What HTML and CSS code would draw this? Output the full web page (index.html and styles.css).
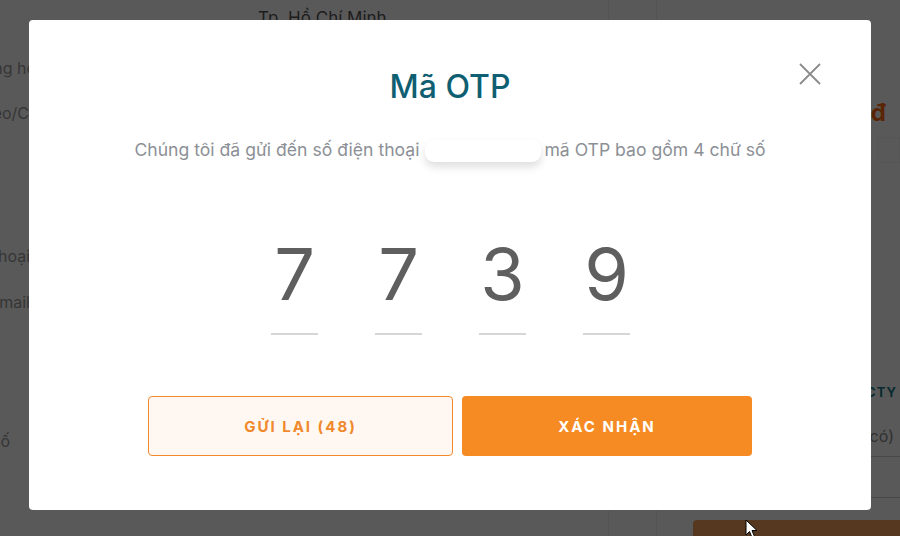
FILE: index.html
```html
<!DOCTYPE html>
<html lang="vi">
<head>
<meta charset="utf-8">
<title>Mã OTP</title>
<link rel="stylesheet" href="styles.css">
</head>
<body>
<div class="page">
  <div class="col-labels">
    <div class="label l1"><span>Cách xưng hô</span></div>
    <div class="label l2"><span>Theo/Cá</span></div>
    <div class="label l3"><span>Số điện thoại</span></div>
    <div class="label l4"><span>Email</span></div>
    <div class="label l5"><span>Mã số</span></div>
  </div>
  <div class="col-main">
    <div class="main-top">Tp. Hồ Chí Minh</div>
    <div class="main-bottom">Phường 05</div>
  </div>
  <div class="col-mid"></div>
  <div class="col-right">
    <div class="price">1.250.000đ</div>
    <div class="price-box"></div>
    <div class="invoice">XUẤT HÓA ĐƠN CTY</div>
    <div class="invoice-note">(nếu có)</div>
    <div class="right-line"></div>
    <div class="right-btn"></div>
  </div>
</div>

<div class="overlay">
  <div class="modal">
    <button class="close" aria-label="Đóng">
      <svg width="22" height="22" viewBox="0 0 22 22"><path d="M1 1 L21 21 M21 1 L1 21" stroke="#8b8b8b" stroke-width="1.8" fill="none"/></svg>
    </button>
    <h2 class="title">Mã OTP</h2>
    <p class="subtitle">Chúng tôi đã gửi đến số điện thoại <span class="mask"></span>mã OTP bao gồm 4 chữ số</p>
    <div class="digits">
      <div class="digit">7</div>
      <div class="digit">7</div>
      <div class="digit">3</div>
      <div class="digit">9</div>
    </div>
    <div class="actions">
      <button class="btn btn-resend">GỬI LẠI (48)</button>
      <button class="btn btn-confirm">XÁC NHẬN</button>
    </div>
  </div>
</div>

<svg class="cursor" width="14" height="20" viewBox="0 0 14 20"><path d="M1 1 L1 16 L4.5 12.5 L7 18.5 L9.5 17.5 L7 11.5 L12 11.5 Z" fill="#fff" stroke="#000" stroke-width="1"/></svg>
</body>
</html>
```

FILE: styles.css
```css
html, body {
  margin: 0;
  padding: 0;
}
body {
  width: 900px;
  height: 536px;
  overflow: hidden;
  background: #fff;
  font-family: Inter, "Noto Sans", sans-serif;
}

/* background page */
.page {
  display: grid;
  grid-template-columns: 258px 351px 48px 243px;
  height: 536px;
  overflow: hidden;
}
.col-labels {
  font-size: 16px;
  color: #9a9a9a;
}
.label {
  width: 36px;
  height: 22px;
  display: flex;
  justify-content: flex-end;
  overflow: hidden;
  white-space: nowrap;
  line-height: 22px;
}
.l1 { margin-top: 57px; }
.l2 { margin-top: 23px; width: 38px; }
.l3 { margin-top: 121px; width: 30px; }
.l4 { margin-top: 24px; width: 30px; }
.l5 { margin-top: 117px; width: 10px; }

.col-main {
  display: flex;
  flex-direction: column;
  justify-content: space-between;
  font-size: 17px;
  color: #555;
  border-right: 1px solid #f0f0f0;
}
.main-top { margin-top: 8px; }
.main-bottom { margin-bottom: -6px; }
.col-mid {
  border-right: 1px solid #f0f0f0;
}
.col-right {
  display: flex;
  flex-direction: column;
  align-items: flex-end;
  padding-right: 14px;
}
.price {
  margin-top: 98px;
  font-size: 24px;
  font-weight: 700;
  color: #ff6a10;
}
.price-box {
  align-self: stretch;
  margin: 10px -14px 0 220px;
  height: 24px;
  border: 1px solid #f6f6f6;
}
.invoice {
  margin-top: 221px;
  margin-right: -11px;
  font-size: 13px;
  font-weight: 700;
  letter-spacing: 1px;
  color: #1b7a8a;
  white-space: nowrap;
}
.invoice-note {
  margin-top: 26px;
  font-size: 16px;
  color: #8a8a8a;
  margin-right: -8px;
}
.right-line {
  align-self: stretch;
  margin: 10px -14px 0 0;
  border-top: 1px solid #cfcfcf;
  height: 40px;
  border-bottom: 1px solid #cfcfcf;
}
.right-btn {
  align-self: stretch;
  margin: 22px -14px 0 36px;
  height: 30px;
  background: #f7a25c;
  border-radius: 4px 0 0 0;
}

/* overlay + modal */
.overlay {
  position: fixed;
  inset: 0;
  background: rgba(0, 0, 0, 0.65);
  display: flex;
  justify-content: center;
  align-items: flex-start;
}
.modal {
  position: relative;
  width: 842px;
  height: 490px;
  margin-top: 20px;
  box-sizing: border-box;
  padding-top: 48px;
  background: #fff;
  border-radius: 4px;
  display: flex;
  flex-direction: column;
  align-items: center;
}
.close {
  position: absolute;
  top: 43px;
  right: 50px;
  width: 22px;
  height: 22px;
  padding: 0;
  border: 0;
  background: none;
  display: flex;
}
.title {
  margin: 0;
  font-size: 32px;
  line-height: 38px;
  font-weight: 500;
  color: #0f5f72;
}
.subtitle {
  margin: 33px 0 0;
  font-size: 17.6px;
  line-height: 22px;
  color: #8c9096;
  white-space: nowrap;
}
.mask {
  display: inline-block;
  width: 116px;
  height: 22px;
  margin-left: 1px;
  margin-right: 3px;
  vertical-align: middle;
  background: #fff;
  border-radius: 9px;
  box-shadow: 0 5px 8px rgba(0, 0, 0, 0.13);
}
.digits {
  margin-top: 76px;
  display: flex;
  gap: 57px;
  margin-left: 1px;
}
.digit {
  width: 47px;
  font-size: 72px;
  line-height: 72px;
  text-align: center;
  color: #5f5f5f;
  padding-bottom: 23px;
  border-bottom: 2px solid #d6d6d6;
}
.actions {
  margin-top: 61px;
  display: flex;
  gap: 9px;
  margin-left: 0;
}
.btn {
  height: 60px;
  box-sizing: border-box;
  border-radius: 4px;
  font-family: Inter, "Noto Sans", sans-serif;
  font-size: 15px;
  font-weight: 700;
  letter-spacing: 2px;
  cursor: pointer;
}
.btn-resend {
  width: 305px;
  background: #fff8f2;
  border: 1.5px solid #f5892a;
  color: #f0892b;
}
.btn-confirm {
  width: 290px;
  background: #f68b24;
  border: 0;
  color: #fff;
}

.cursor {
  position: fixed;
  left: 745px;
  top: 519px;
}
```
